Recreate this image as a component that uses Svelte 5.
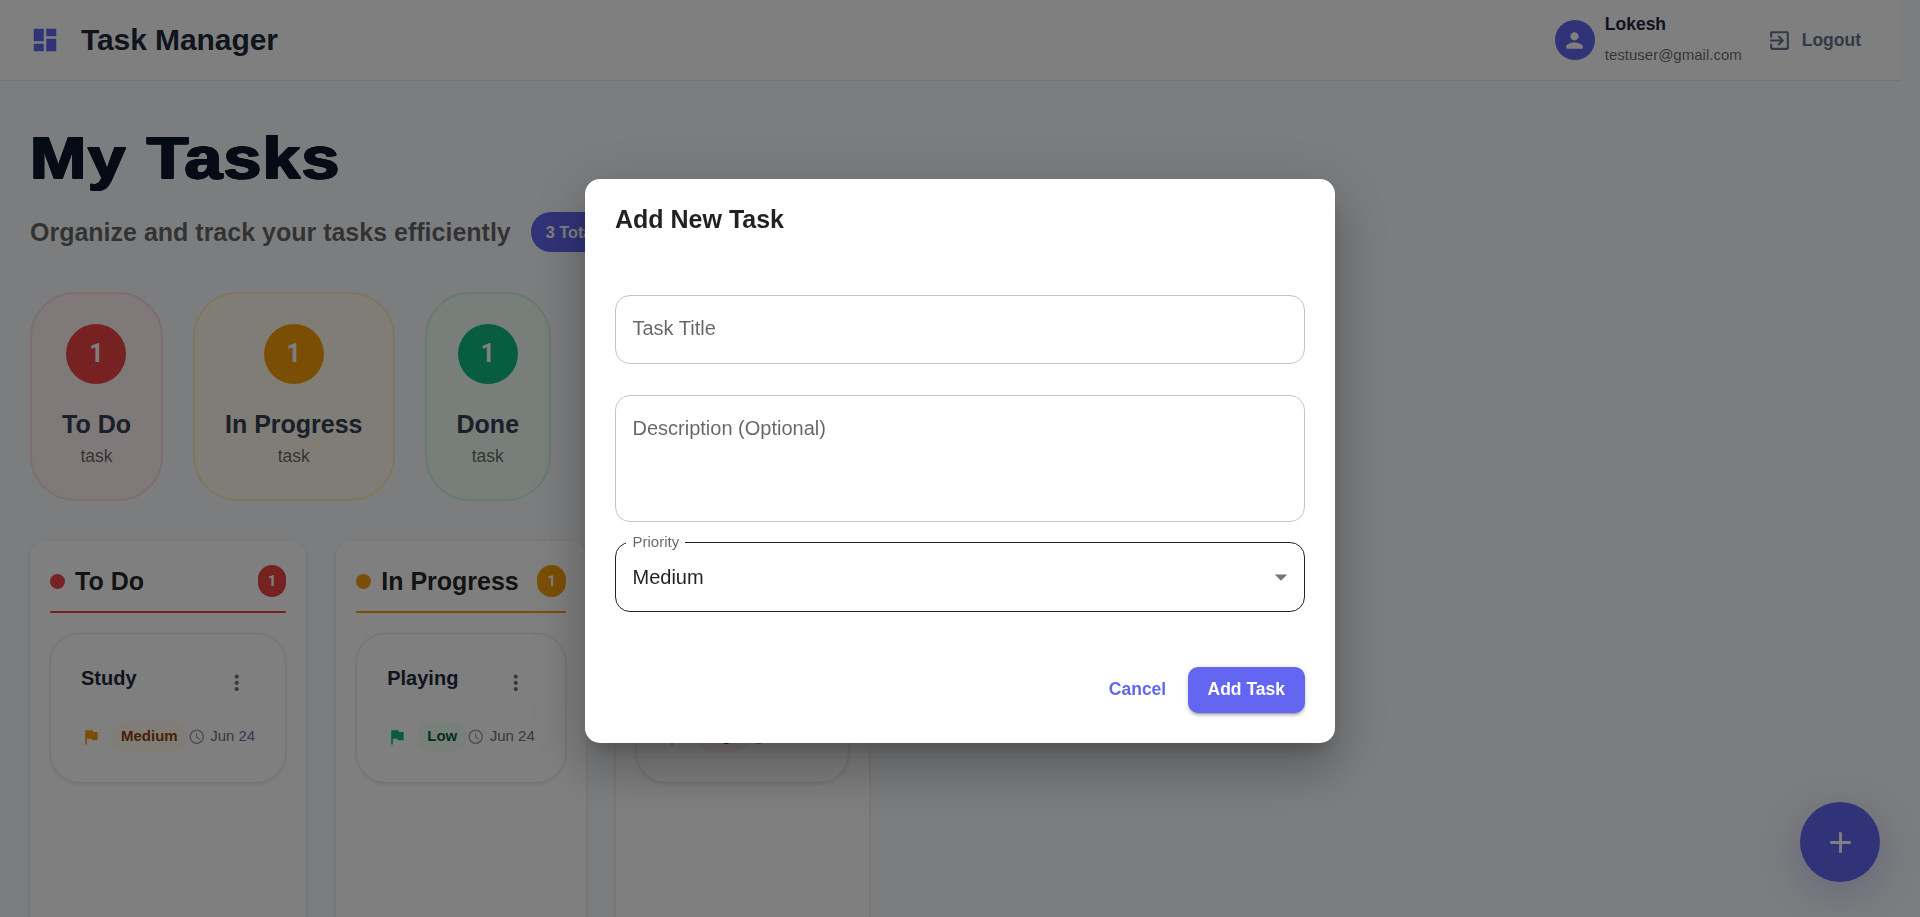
<script>
  const stats = [
    { label: 'To Do', tone: 'red' },
    { label: 'In Progress', tone: 'amber' },
    { label: 'Done', tone: 'green' }
  ];
  const columns = [
    { label: 'To Do', tone: 'red', task: 'Study', priority: 'Medium' },
    { label: 'In Progress', tone: 'amber', task: 'Playing', priority: 'Low' },
    { label: '', tone: 'green', task: '', priority: 'High' }
  ];
</script>

<div class="page">
  <header>
    <svg class="brand" viewBox="0 0 24 24"><path d="M3 13h8V3H3zm0 8h8v-6H3zm10 0h8V11h-8zm0-18v6h8V3z" /></svg>
    <span class="name">Task Manager</span>
    <div class="avatar">
      <svg viewBox="0 0 24 24"><path d="M12 12c2.21 0 4-1.79 4-4s-1.79-4-4-4-4 1.79-4 4 1.79 4 4 4m0 2c-2.67 0-8 1.34-8 4v2h16v-2c0-2.66-5.33-4-8-4" /></svg>
    </div>
    <div class="user">
      <b>Lokesh</b>
      <span>testuser@gmail.com</span>
    </div>
    <button class="logout">
      <svg viewBox="0 0 24 24"><path d="M10.09 15.59 11.5 17l5-5-5-5-1.41 1.41L12.67 11H3v2h9.67zM19 3H5c-1.11 0-2 .9-2 2v4h2V5h14v14H5v-4H3v4c0 1.1.89 2 2 2h14c1.1 0 2-.9 2-2V5c0-1.1-.9-2-2-2" /></svg>
      Logout
    </button>
  </header>

  <main>
    <h1>My Tasks</h1>
    <div class="sub">
      <h2>Organize and track your tasks efficiently</h2>
      <span class="total">3 Total</span>
    </div>

    <div class="stats">
      {#each stats as s}
        <div class="stat {s.tone}">
          <div class="circle">1</div>
          <div class="stat-label">{s.label}</div>
          <div class="stat-unit">task</div>
        </div>
      {/each}
    </div>

    <div class="board">
      {#each columns as c}
        <section class={c.tone}>
          <div class="col-head">
            <i class="dot"></i>
            <h3>{c.label}</h3>
            <span class="count">1</span>
          </div>
          <article>
            <div class="top">
              <h4>{c.task}</h4>
              <svg class="more" viewBox="0 0 24 24"><path d="M12 8c1.1 0 2-.9 2-2s-.9-2-2-2-2 .9-2 2 .9 2 2 2m0 2c-1.1 0-2 .9-2 2s.9 2 2 2 2-.9 2-2-.9-2-2-2m0 6c-1.1 0-2 .9-2 2s.9 2 2 2 2-.9 2-2-.9-2-2-2" /></svg>
            </div>
            <div class="meta {c.priority.toLowerCase()}">
              <svg class="flag" viewBox="0 0 24 24"><path d="M14.4 6 14 4H5v17h2v-7h5.6l.4 2h7V6z" /></svg>
              <span class="chip">{c.priority}</span>
              <svg class="clock" viewBox="0 0 24 24"><path d="M11.99 2C6.47 2 2 6.48 2 12s4.47 10 9.99 10C17.52 22 22 17.52 22 12S17.52 2 11.99 2M12 20c-4.42 0-8-3.58-8-8s3.58-8 8-8 8 3.58 8 8-3.58 8-8 8m.5-13H11v6l5.25 3.15.75-1.23-4.5-2.67z" /></svg>
              <span class="date">Jun 24</span>
            </div>
          </article>
        </section>
      {/each}
    </div>
  </main>

  <button class="fab" aria-label="Add">
    <svg viewBox="0 0 24 24"><path d="M19 13h-6v6h-2v-6H5v-2h6V5h2v6h6z" /></svg>
  </button>
</div>

<div class="backdrop">
  <div class="dialog">
    <h2>Add New Task</h2>
    <div class="field title">Task Title</div>
    <div class="field desc">Description (Optional)</div>
    <fieldset class="select">
      <legend>Priority</legend>
      <div class="value">
        <span>Medium</span>
        <svg viewBox="0 0 24 24"><path d="m7 10 5 5 5-5z" /></svg>
      </div>
    </fieldset>
    <div class="actions">
      <button class="cancel">Cancel</button>
      <button class="add">Add Task</button>
    </div>
  </div>
</div>

<style>
  :global(body) {
    margin: 0;
    overflow: hidden;
    background: #f8fafc;
    font-family: 'Liberation Sans', Arial, sans-serif;
  }
  * { box-sizing: border-box; }
  h1, h2, h3, h4 { margin: 0; font-weight: 700; }
  svg { display: block; fill: currentColor; flex-shrink: 0; }
  button { border: 0; background: none; font: 700 17.5px/30.6px 'Liberation Sans', Arial, sans-serif; }

  .page {
    height: 917px;
    overflow: hidden;
    padding-right: 19px;
    background: #f8fafc;
  }
  header {
    height: 81px;
    padding: 0 30px;
    display: flex;
    align-items: center;
    background: #fff;
    border-bottom: 1px solid #e2e8f0;
  }
  .brand { width: 30px; height: 30px; color: #6366f1; margin-right: 21px; }
  .name { flex: 1; font-size: 30px; font-weight: 700; color: #1e293b; line-height: 48px; letter-spacing: -.08px; }
  .avatar {
    width: 40px; height: 40px; border-radius: 50%;
    background: #6366f1; color: #fff;
    display: grid; place-items: center;
    margin-right: 10px;
  }
  .avatar svg { width: 25px; height: 25px; }
  .user { display: flex; flex-direction: column; margin-right: 20px; padding-bottom: 2px; }
  .user b { font-size: 17.5px; line-height: 31px; color: #1e293b; }
  .user span { font-size: 15px; line-height: 30px; color: rgba(0, 0, 0, .6); }
  .logout { display: flex; align-items: center; gap: 10px; padding: 7px 10px 7px 5px; color: #64748b; }
  .logout svg { width: 25px; height: 25px; }

  main { padding: 41px 30px 0; }
  h1 {
    width: max-content;
    font-size: 59px;
    line-height: 72px;
    letter-spacing: 1.1px;
    color: #0f172a;
    transform: scaleX(1.15);
    transform-origin: 0 50%;
    text-shadow:
      .9px 0 #0f172a, -.9px 0 #0f172a, 0 .5px #0f172a, 0 -.5px #0f172a,
      .9px .5px #0f172a, -.9px .5px #0f172a, .9px -.5px #0f172a, -.9px -.5px #0f172a;
  }
  .sub { display: flex; align-items: center; gap: 20px; margin-top: 18px; }
  .sub h2 { font-size: 25px; line-height: 40px; color: rgba(0, 0, 0, .6); }
  .total {
    height: 40px; padding: 0 15px; border-radius: 20px;
    background: #6366f1; color: #fff;
    font-size: 16.25px; font-weight: 700; line-height: 40px;
  }

  .stats { display: flex; gap: 30px; margin-top: 40px; }
  .stat {
    height: 209px; padding: 30px; border: 2px solid; border-radius: 45px;
    display: flex; flex-direction: column; align-items: center;
  }
  .stat.red { background: #fef2f2; border-color: #fcdcdc; }
  .stat.amber { background: #fffbeb; border-color: #fdeebb; }
  .stat.green { background: #f0fdf4; border-color: #d6f5e0; }
  .circle {
    width: 60px; height: 60px; border-radius: 50%; margin-bottom: 20px;
    background: var(--tone); color: #fff;
    font: 700 25px/60px Roboto, sans-serif; text-align: center;
  }
  .red { --tone: #ef4444; }
  .amber { --tone: #f59e0b; }
  .green { --tone: #10b981; }
  .stat-label { font-size: 25px; font-weight: 700; line-height: 40px; color: #334155; }
  .stat-unit { font-size: 17.5px; line-height: 25px; color: rgba(0, 0, 0, .6); }

  .board { display: flex; gap: 30px; margin-top: 40px; }
  section {
    height: 600px; padding: 20px; border-radius: 15px; background: #fff;
    box-shadow: 0 1px 4px rgba(0, 0, 0, .1);
  }
  .col-head {
    display: flex; align-items: center; height: 52px; padding-bottom: 10px;
    border-bottom: 2px solid var(--tone); margin-bottom: 20px;
  }
  .dot { width: 15px; height: 15px; border-radius: 50%; background: var(--tone); margin-right: 10px; }
  h3 { flex: 1; font-size: 25px; line-height: 40px; color: rgba(0, 0, 0, .87); }
  .count {
    width: 28.3px; text-align: center; border-radius: 15px; background: var(--tone); color: #fff;
    font: 700 15px/32px Roboto, sans-serif;
  }
  article {
    padding: 30px; border: 1px solid #e2e8f0; border-radius: 30px; background: #fff;
    box-shadow: 0 1px 4px rgba(0, 0, 0, .1);
  }
  .top { display: flex; justify-content: space-between; height: 37.5px; margin-bottom: 20px; }
  h4 { font-size: 20px; line-height: 28px; color: #1e293b; }
  .more { width: 37.5px; height: 37.5px; padding: 6.25px; color: #64748b; }
  .meta { display: flex; align-items: center; height: 30px; }
  .flag { width: 20px; height: 20px; color: var(--level); margin-right: 10px; }
  .chip {
    height: 30px;
    padding: 0 10px; border-radius: 15px; background: var(--soft); color: var(--ink);
    font-size: 15px; font-weight: 700; line-height: 28px;
  }
  .medium { --level: #f59e0b; --soft: #fffbeb; --ink: #92400e; }
  .low { --level: #10b981; --soft: #f0fdf4; --ink: #065f46; }
  .high { --level: #ef4444; --soft: #fef2f2; --ink: #991b1b; }
  .clock { width: 17.5px; height: 17.5px; color: #94a3b8; margin-right: 5px; }
  .date { font-size: 15px; line-height: 25px; padding-bottom: 2px; color: #64748b; white-space: nowrap; }

  .fab {
    position: fixed; right: 40px; bottom: 35px;
    width: 80px; height: 80px; border-radius: 50%; padding: 0;
    display: grid; place-items: center;
    background: #6366f1; color: #fff;
    box-shadow: 0 10px 40px rgba(99, 102, 241, .3);
  }
  .fab svg { width: 35px; height: 35px; }

  .backdrop {
    position: fixed; inset: 0; padding-top: 179px;
    display: flex; justify-content: center; align-items: flex-start;
    background: rgba(0, 0, 0, .5);
  }
  .dialog {
    width: 750px; height: 564px; padding: 20px 30px 30px; border-radius: 15px; background: #fff;
    display: flex; flex-direction: column;
    box-shadow:
      0 13.75px 18.75px -8.75px rgba(0, 0, 0, .2),
      0 30px 47.5px 3.75px rgba(0, 0, 0, .14),
      0 11.25px 57.5px 10px rgba(0, 0, 0, .12);
  }
  .dialog h2 { font-size: 25px; line-height: 40px; color: rgba(0, 0, 0, .87); margin-bottom: 56px; }
  .field {
    border: 1px solid #c4c4c4; border-radius: 15px; padding: 18px 16.5px;
    font-size: 20px; line-height: 29px; color: rgba(0, 0, 0, .6);
  }
  .title { height: 69px; margin-bottom: 31px; }
  .desc { height: 127px; margin-bottom: 11px; }
  .select {
    height: 79px; margin: 0; padding: 0 3px 0 16.5px; min-width: 0;
    border: 1px solid #212121; border-radius: 15px;
    font-size: 20px; color: rgba(0, 0, 0, .87);
  }
  .select legend {
    margin-left: -7px; padding: 0 6px 0 7px;
    font-size: 15px; line-height: 18px; color: rgba(0, 0, 0, .6);
  }
  .value { display: flex; justify-content: space-between; align-items: center; height: 30px; margin-top: 11px; padding-right: 5px; }
  .value svg { width: 30px; height: 30px; color: rgba(0, 0, 0, .54); }
  .actions { display: flex; justify-content: flex-end; gap: 10px; margin-top: auto; }
  .cancel { width: 80px; padding: 0; color: #6366f1; height: 46px; line-height: 44px; padding-bottom: 2px; }
  .add {
    height: 46px; padding: 0 20px 2px; border-radius: 10px; background: #6366f1; color: #fff; line-height: 44px;
    box-shadow: 0 4px 1px -3px rgba(0, 0, 0, .2), 0 2.5px 2.5px rgba(0, 0, 0, .14), 0 1px 6px rgba(0, 0, 0, .12);
  }
</style>
